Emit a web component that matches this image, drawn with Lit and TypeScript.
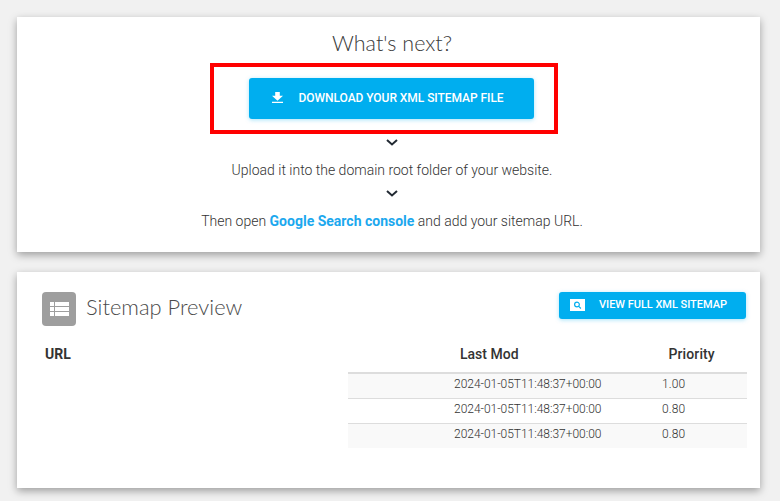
import { LitElement, html, css } from "lit";
import { customElement } from "lit/decorators.js";

const rows = [
  ["2024-01-05T11:48:37+00:00", "1.00"],
  ["2024-01-05T11:48:37+00:00", "0.80"],
  ["2024-01-05T11:48:37+00:00", "0.80"],
];

const chevron = html`<svg class="chev" width="12" height="7" viewBox="0 0 12 7"><path d="M1 1l5 4.500L11 1" fill="none" stroke="#222a33" stroke-width="2"/></svg>`;

@customElement("app-root")
export class AppRoot extends LitElement {
  static styles = css`
    :host { display: block; width: 780px; height: 501px; overflow: hidden; background: #f1f1f1; font-family: Roboto, sans-serif; color: #444; box-sizing: border-box; padding: 17px 20px 0 17px; }
    .card { background: #fff; box-shadow: 0 3px 8px rgba(0,0,0,.35); }
    .next { position: relative; height: 235px; display: flex; flex-direction: column; align-items: center; box-sizing: border-box; padding: 12px 0 0 7px; margin-bottom: 20px; }
    h2 { margin: 0; font: 300 21.5px/28px Lato, sans-serif; color: #3a3a3a; }
    .mark { position: absolute; left: 193px; top: 46px; box-sizing: border-box; width: 348px; height: 71px; border: 4px solid #f00; pointer-events: none; }
    .btn { display: flex; align-items: center; box-sizing: border-box; background: #00aeef; color: #fff; border-radius: 3px; font-weight: 500; text-transform: uppercase; box-shadow: 0 1px 4px rgba(0,174,239,.35); }
    .dl { width: 285px; height: 41px; margin: 21px 2px 0 0; font-size: 12px; letter-spacing: -.05px; padding: 0 0 2px 23px; gap: 16px; }
    .chev { display: block; }
    .c1 { margin-top: 20px; }
    .c2 { margin-top: 11px; }
    p { margin: 0; font-size: 14px; font-weight: 300; line-height: 17px; color: #333; }
    .p1 { margin-top: 16px; }
    .p2 { margin-top: 16px; }
    a { color: #1ca8ee; font-weight: 700; text-decoration: none; }
    .preview { height: 216px; box-sizing: border-box; padding: 20px 13px 0 25px; }
    .head { display: flex; align-items: flex-start; }
    .tile { width: 34px; height: 34px; background: #9e9e9e; border-radius: 4px; display: flex; align-items: center; justify-content: center; }
    h3 { margin: 0 0 0 10px; font: 300 21.9px/30px Lato, sans-serif; color: #4a4a4a; }
    .view { margin: 0 1px 0 auto; width: 187px; height: 27px; font-size: 11px; letter-spacing: -.03px; padding: 0 0 2px 11px; gap: 14px; }
    .th { display: grid; grid-template-columns: 306px 1fr; margin-top: 20px; height: 26px; font-size: 14px; font-weight: 700; color: #333; line-height: 17px; }
    .th .url { padding-left: 3px; }
    .th .cols { display: flex; }
    .th .lm { margin-left: 112px; font-weight: 500; }
    .th .pr { margin-left: 150px; font-weight: 500; letter-spacing: .1px; }
    .table { margin-left: 306px; border-top: 2px solid #ddd; }
    .row { display: flex; height: 25px; box-sizing: border-box; border-bottom: 1px solid #ddd; font-size: 12px; font-weight: 300; color: #333; line-height: 20px; padding-left: 106px; }
    .row:nth-child(odd) { background: #f9f9f9; }
    .row:last-child { border-bottom: 0; height: 24px; }
    .row .d { width: 208px; letter-spacing: -.03px; }
    .row .n { letter-spacing: .1px; }
  `;

  render() {
    return html`
      <section class="card next">
        <h2>What's next?</h2>
        <div class="btn dl">
          <svg width="11" height="11" viewBox="0 0 12 12"><path d="M3.500 0h5v4H12L6 9.500 0 4h3.500zM0 10.500h12V12H0z" fill="#fff"/></svg>
          <span>Download your XML sitemap file</span>
        </div>
        <div class="mark"></div>
        <div class="c1">${chevron}</div>
        <p class="p1">Upload it into the domain root folder of your website.</p>
        <div class="c2">${chevron}</div>
        <p class="p2">Then open <a href="#">Google Search console</a> and add your sitemap URL.</p>
      </section>
      <section class="card preview">
        <div class="head">
          <div class="tile">
            <svg width="19" height="14" viewBox="0 0 19 14"><path d="M0 0h4v4H0zM5 0h14v4H5zM0 5h4v4H0zM5 5h14v4H5zM0 10h4v4H0zM5 10h14v4H5z" fill="#fff"/></svg>
          </div>
          <h3>Sitemap Preview</h3>
          <div class="btn view">
            <svg width="15" height="12" viewBox="0 0 15 12"><path fill-rule="evenodd" d="M0 0h15v12H0zM7 2.500a3 3 0 1 0 0 6 3 3 0 0 0 1.600-.5l1.900 1.900.8-.8-1.900-1.900A3 3 0 0 0 7 2.500zm0 1.200a1.800 1.800 0 1 1 0 3.600 1.800 1.800 0 0 1 0-3.600z" fill="#fff"/></svg>
            <span>View full XML sitemap</span>
          </div>
        </div>
        <div class="th">
          <div class="url">URL</div>
          <div class="cols"><span class="lm">Last Mod</span><span class="pr">Priority</span></div>
        </div>
        <div class="table">
          ${rows.map((r) => html`<div class="row"><span class="d">${r[0]}</span><span class="n">${r[1]}</span></div>`)}
        </div>
      </section>
    `;
  }
}
